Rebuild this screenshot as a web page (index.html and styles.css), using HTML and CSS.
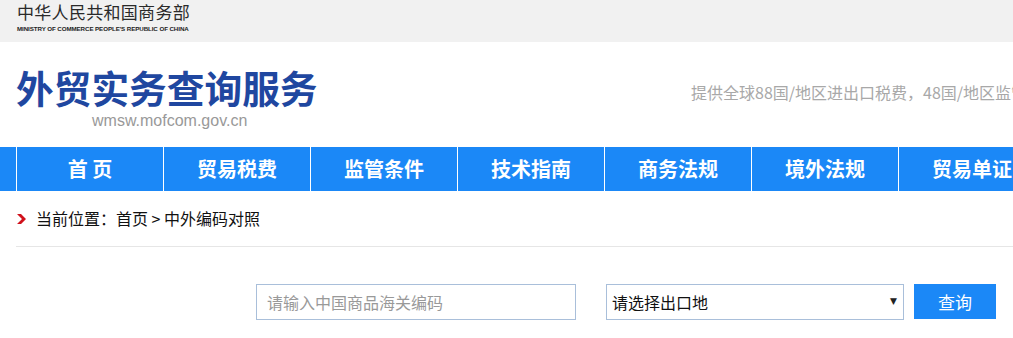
FILE: index.html
```html
<!DOCTYPE html>
<html lang="zh-CN">
<head>
<meta charset="utf-8">
<title>外贸实务查询服务</title>
<link rel="stylesheet" href="styles.css">
</head>
<body>
<div class="topbar">
  <div class="wrap">
    <div class="mof">
      <div class="mof-cn">中华人民共和国商务部</div>
      <div class="mof-en">MINISTRY OF COMMERCE PEOPLE'S REPUBLIC OF CHINA</div>
    </div>
  </div>
</div>
<div class="header">
  <div class="wrap header-in">
    <div class="brand">
      <div class="brand-title">外贸实务查询服务</div>
      <div class="brand-url">wmsw.mofcom.gov.cn</div>
    </div>
    <div class="tagline">提供全球88国/地区进出口税费，48国/地区监管条件及贸易单证查询</div>
  </div>
</div>
<div class="nav">
  <div class="wrap nav-in">
    <a class="nav-item">首 页</a>
    <a class="nav-item">贸易税费</a>
    <a class="nav-item">监管条件</a>
    <a class="nav-item">技术指南</a>
    <a class="nav-item">商务法规</a>
    <a class="nav-item">境外法规</a>
    <a class="nav-item">贸易单证</a>
    <a class="nav-item">常见问题</a>
  </div>
</div>
<div class="wrap">
  <div class="crumb">
    <svg class="chev" width="9" height="10" viewBox="0 0 9 10"><path d="M0 0 H4 L9 5 L4 10 H0 L5 5 Z" fill="#d0111b"/></svg>
    <span>当前位置：首页 &gt; 中外编码对照</span>
  </div>
  <div class="search">
    <input class="code" type="text" placeholder="请输入中国商品海关编码">
    <div class="select">
      <span class="select-text">请选择出口地</span>
      <span class="select-arrow">▼</span>
    </div>
    <button class="btn">查询</button>
  </div>
</div>
</body>
</html>
```
FILE: styles.css
```css
html, body {
  margin: 0;
  padding: 0;
  overflow: hidden;
  background: #fff;
  font-family: "Noto Sans CJK SC", "Liberation Sans", sans-serif;
}
.wrap {
  width: 1180px;
  margin-left: 16px;
}
.topbar {
  background: #f1f1f1;
  height: 42px;
}
.mof {
  padding-top: 2px;
  padding-left: 1px;
}
.mof-cn {
  font-size: 17px;
  line-height: 20px;
  color: #2a2a2a;
  letter-spacing: 0.3px;
}
.mof-en {
  font-family: "Liberation Sans", sans-serif;
  font-size: 6.2px;
  line-height: 10px;
  color: #222;
  font-weight: bold;
  margin-top: 2px;
  letter-spacing: -0.08px;
}
.header {
  height: 105px;
}
.header-in {
  display: flex;
}
.brand {
  width: 675px;
  flex: none;
}
.brand-title {
  padding-top: 20px;
  font-size: 37.7px;
  line-height: 50px;
  font-weight: bold;
  color: #1f47a0;
}
.brand-url {
  font-family: "Liberation Sans", sans-serif;
  font-size: 16px;
  line-height: 20px;
  color: #999;
  padding-left: 76px;
  margin-top: -1px;
}
.tagline {
  white-space: nowrap;
  padding-top: 40px;
  font-size: 16px;
  line-height: 20px;
  color: #a8a8a8;
}
.nav {
  background: #1b88f7;
  height: 44px;
}
.nav-in {
  display: flex;
  height: 44px;
}
.nav-item {
  flex: none;
  width: 146px;
  border-left: 1px solid #fff;
  color: #fff;
  font-size: 20px;
  font-weight: bold;
  line-height: 44px;
  text-align: center;
}
.crumb {
  display: flex;
  align-items: flex-start;
  height: 56px;
  box-sizing: border-box;
  padding-top: 16px;
  border-bottom: 1px solid #e6e6e6;
}
.chev {
  margin-left: 1px;
  margin-top: 7px;
}
.crumb span {
  margin-left: 10px;
  font-size: 16px;
  line-height: 22px;
  color: #111;
  white-space: pre;
}
.search {
  display: flex;
  padding-top: 37px;
  padding-left: 240px;
}
.code {
  width: 320px;
  height: 36px;
  box-sizing: border-box;
  border: 1px solid #a9bfda;
  padding: 0 10px;
  font-family: "Noto Sans CJK SC", sans-serif;
  font-size: 16px;
  outline: none;
}
.code::placeholder {
  color: #999;
}
.select {
  position: relative;
  margin-left: 30px;
  width: 298px;
  height: 36px;
  box-sizing: border-box;
  border: 1px solid #a9bfda;
  display: flex;
  align-items: center;
  padding-left: 5px;
}
.select-text {
  font-size: 16px;
  color: #111;
}
.select-arrow {
  position: absolute;
  right: 6px;
  top: 11px;
  font-size: 9px;
  color: #222;
  font-family: "DejaVu Sans", sans-serif;
}
.btn {
  margin-left: 10px;
  width: 82px;
  height: 35px;
  border: none;
  background: #1b88f7;
  color: #fff;
  font-family: "Noto Sans CJK SC", sans-serif;
  font-size: 17px;
  padding: 0;
}
```
